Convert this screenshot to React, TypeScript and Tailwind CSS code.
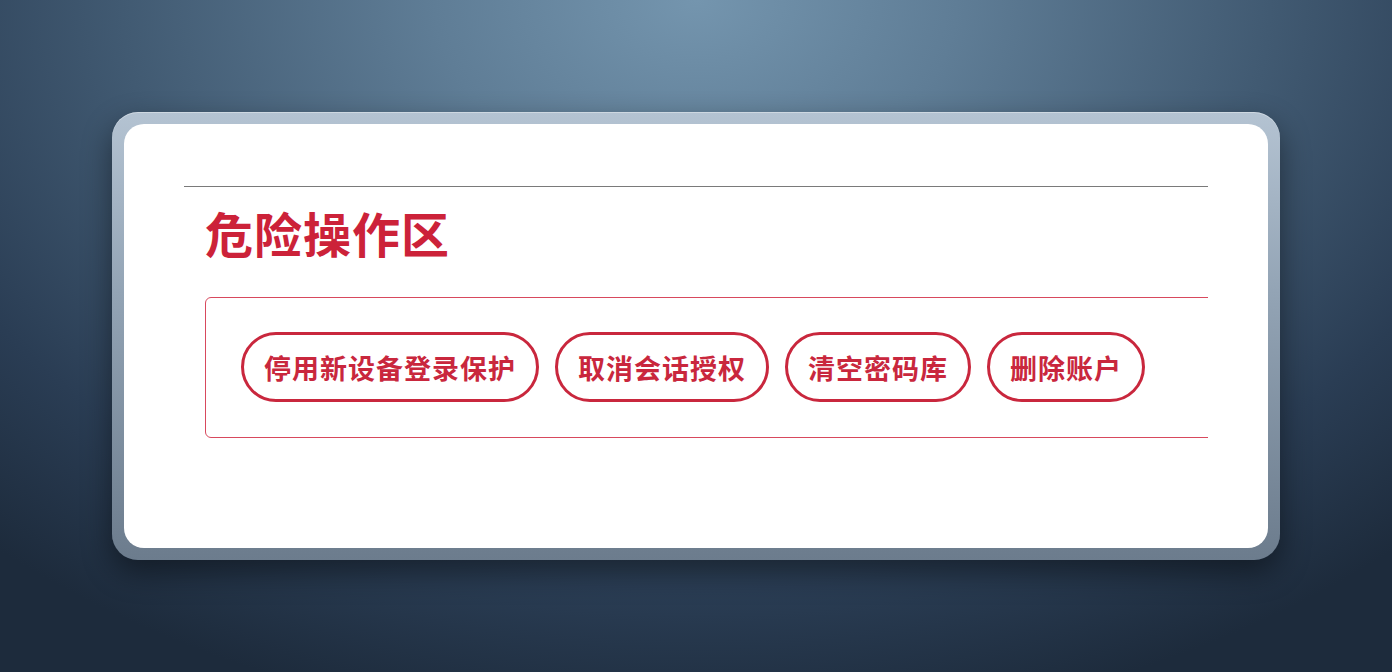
import React from "react";

const buttons = ["停用新设备登录保护", "取消会话授权", "清空密码库", "删除账户"];

export default function App() {
  return (
    <div
      className="w-[1392px] h-[672px] flex items-center justify-center overflow-hidden"
      style={{
        background:
          "radial-gradient(ellipse 75% 110% at 50% 0%, #7495ae 0%, #5f7d96 25%, #415a72 55%, #2a3d54 80%, #1d2b3c 100%)",
        fontFamily: '"Noto Sans CJK SC", "Noto Sans", sans-serif',
      }}
    >
      <div className="w-[1168px] h-[448px] rounded-[26px] p-[12px] bg-[linear-gradient(180deg,#b4c3d2_0%,#93a4b5_40%,#6c7c8d_100%)] shadow-[0_12px_30px_rgba(0,0,0,0.45),inset_0_1px_0_rgba(255,255,255,0.35)]">
        <div className="w-full h-full bg-white rounded-[20px] px-[60px] pt-[62px]">
          <div className="overflow-hidden">
            <div className="h-px bg-[#7a7a7a]" />
            <div className="pl-[21px]">
              <h2 className="mt-[19px] text-[48px] leading-[52px] font-bold text-[#cc2239] tracking-[1px]">
                危险操作区
              </h2>
              <div className="mt-[39px] w-[1100px] border border-[#d8495d] rounded-l-[6px] pl-[35px] pt-[34px] pb-[35px] flex gap-[16px]">
                {buttons.map((b) => (
                  <button
                    key={b}
                    className="h-[70px] px-[20px] rounded-full border-[3px] border-[#c9273d] bg-white text-[#c9273d] text-[27px] font-bold tracking-[1px] leading-none"
                  >
                    {b}
                  </button>
                ))}
              </div>
            </div>
          </div>
        </div>
      </div>
    </div>
  );
}
